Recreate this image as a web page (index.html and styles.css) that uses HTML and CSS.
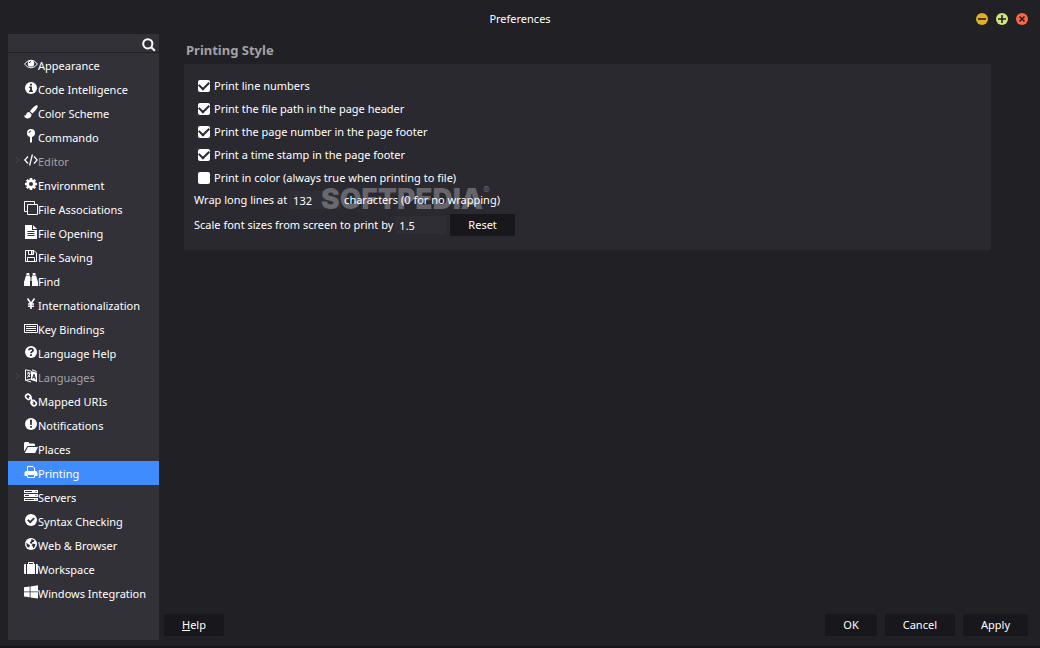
FILE: index.html
```html
<!DOCTYPE html>
<html lang="en">
  <head>
    <meta charset="UTF-8" />
    <meta name="viewport" content="width=device-width, initial-scale=1.0" />
    <title>Preferences</title>
    <link rel="stylesheet" href="styles.css">
  </head>
  <body>
    <header class="titlebar">
      <h1>Preferences</h1>
      <div class="window-buttons">
        <button type="button" class="minimize" aria-label="Minimize">
          <svg viewBox="0 0 12 12"><path d="M2 6h8" /></svg>
        </button>
        <button type="button" class="maximize" aria-label="Maximize">
          <svg viewBox="0 0 12 12"><path d="M2 6h8M6 2v8" /></svg>
        </button>
        <button type="button" class="close" aria-label="Close">
          <svg viewBox="0 0 12 12"><path d="M3.500 3.500l5 5M8.500 3.500l-5 5" /></svg>
        </button>
      </div>
    </header>

    <div class="content">
      <aside class="sidebar">
        <div class="search">
          <input type="search" aria-label="Filter preferences" />
          <svg viewBox="0 0 14 14"><circle cx="5.800" cy="5.800" r="4.600" /><path d="M9.200 9.200l3.600 3.600" /></svg>
        </div>
        <nav>
          <a href="#appearance">
            <svg viewBox="0 0 14 14"><path class="line" d="M.6 7Q3 3.200 7 3.200T13.400 7Q11 10.800 7 10.800T.6 7z" /><circle cx="7" cy="6.400" r="3.200" /><path class="cut-line" d="M5.300 6.200a1.700 1.700 0 0 1 1.700-1.700" /></svg>
            Appearance
          </a>
          <a href="#code-intelligence">
            <svg viewBox="0 0 14 14"><circle cx="7" cy="7" r="6" /><path class="cut" d="M6 2.800h2v1.700H6zM5.200 5.600H8v4h.9v1.300H5.100V9.600H6V6.900h-.8z" /></svg>
            Code Intelligence
          </a>
          <a href="#color-scheme">
            <svg viewBox="0 0 14 14"><path d="M12.300.3c.9-.3 1.700.5 1.400 1.400-.8 2.300-3 4.900-5.400 6.700L6 6.300C7.600 3.900 10 1.200 12.300.3zM5.200 7l2.300 2.200c.1 2.300-1.300 4.200-3.700 4.200-2.100 0-3.300-1.100-3.800-3.200.8.500 1.500.6 2-.2C2.400 8.200 3.500 6.900 5.200 7z" /></svg>
            Color Scheme
          </a>
          <a href="#commando">
            <svg viewBox="0 0 14 14"><circle cx="7" cy="4" r="4" /><path d="M6 7h2v6.500H6z" /><path class="cut-line" d="M5 4a2 2 0 0 1 2-2" /></svg>
            Commando
          </a>
          <a href="#editor" class="group">
            <svg class="chevron" viewBox="0 0 6 8"><path d="M1 1l3 3-3 3" /></svg>
            <svg viewBox="0 0 14 14"><path class="code" d="M4 3.500L.8 7 4 10.500M10 3.500L13.200 7 10 10.500M8.400 1.500l-2.800 11" /></svg>
            Editor
          </a>
          <a href="#environment">
            <svg viewBox="0 0 14 14"><path class="teeth" d="M7 1v12M1 7h12M2.800 2.800l8.400 8.400M11.200 2.800l-8.400 8.400" /><circle cx="7" cy="7" r="4.600" /><circle class="cut" cx="7" cy="7" r="2" /></svg>
            Environment
          </a>
          <a href="#file-associations">
            <svg viewBox="0 0 14 14"><path class="line" d="M3.500 3.500h10v10h-10zM3 10.500H.5V.5h10V3" /></svg>
            File Associations
          </a>
          <a href="#file-opening">
            <svg viewBox="0 0 14 14"><path d="M1 0h7v5h5v9H1zM9 0l4 4H9z" /><path class="cut-line" d="M3.500 6.500h7M3.500 8.500h7M3.500 10.500h7" /></svg>
            File Opening
          </a>
          <a href="#file-saving">
            <svg viewBox="0 0 14 14"><path class="line" d="M1.500 1.500h8.500l2.500 2.500v8.500h-11zM3.500 12.500v-4h7v4M4.500 1.500v4h5v-4" /><path d="M7 2h1.500v3H7z" /></svg>
            File Saving
          </a>
          <a href="#find">
            <svg viewBox="0 0 14 14"><path d="M2.500 0h2.800v2H2.500zM8.700 0h2.800v2H8.700zM2 2.500h4V13H0V9zM8 2.500h4L14 9v4H8zM6.500 4h1v4h-1z" /></svg>
            Find
          </a>
          <a href="#internationalization">
            <svg viewBox="0 0 14 14"><path class="thick" d="M3.500 1.500L7 6.500l3.500-5M7 6.500V12M4 7h6M4 9.200h6" /></svg>
            Internationalization
          </a>
          <a href="#key-bindings">
            <svg viewBox="0 0 14 14"><path class="line" d="M0 3.500h13.500v8H.5v-8M2 5.500h10M2 7.500h10M2 9.500h10" /></svg>
            Key Bindings
          </a>
          <a href="#language-help">
            <svg viewBox="0 0 14 14"><circle cx="7" cy="7" r="6" /><path class="cut-thick" d="M5 5.300Q5 3.700 7 3.700T9 5.300Q9 6.200 8 6.700T7 8.200" /><path class="cut" d="M6.100 9.200h1.800v1.700H6.100z" /></svg>
            Language Help
          </a>
          <a href="#languages" class="group">
            <svg class="chevron" viewBox="0 0 6 8"><path d="M1 1l3 3-3 3" /></svg>
            <svg viewBox="0 0 14 14"><path class="line" d="M7 2L1.500.8v10.500L7 10M1.500 11.300L7 13M3 4h3.500M4.500 3v1.500M3 8.500Q5.500 7.500 6 4M3.500 5.500L6 8M8 .8l4.500 1.700" /><path d="M7 2l6 1.800V13l-6-2z" /><path class="cut-line" d="M8.500 9.500L10 5.200l1.500 5.300M9 8.200l2 .6" /></svg>
            Languages
          </a>
          <a href="#mapped-uris">
            <svg viewBox="0 0 14 14"><rect class="thick" x="1.500" y="1.500" width="5.500" height="4.500" rx="2.200" transform="rotate(45 4.200 3.800)" /><rect class="thick" x="7" y="8" width="5.500" height="4.500" rx="2.200" transform="rotate(45 9.800 10.200)" /><path class="thick" d="M5 4.500Q8 5 7.500 7.500T9.500 10" /></svg>
            Mapped URIs
          </a>
          <a href="#notifications">
            <svg viewBox="0 0 14 14"><circle cx="7" cy="7" r="6" /><path class="cut" d="M6 2.800h2L7.800 8H6.200zM6.100 9h1.800v1.800H6.100z" /></svg>
            Notifications
          </a>
          <a href="#places">
            <svg viewBox="0 0 14 14"><path d="M0 10.500V2l1-1h3.500l1 1.500H10l1 1V5H3.500zM4 6h10l-2.800 6H.8z" /></svg>
            Places
          </a>
          <a href="#printing" class="selected" aria-current="page">
            <svg viewBox="0 0 14 14"><path class="line" d="M3.500 7V1.500h5.500l1.500 1.500V7M3.500 9.500h7v3h-7z" /><path d="M2.500 6h9Q13.500 6 13.500 8v3H11V9H3v2H.5V8Q.5 6 2.500 6z" /></svg>
            Printing
          </a>
          <a href="#servers">
            <svg viewBox="0 0 14 14"><path d="M0 1h14v3H0zM0 5h14v3H0zM0 9h14v3H0z" /><path class="cut-line" d="M1 2.500h7M1 6.500h4M1 10.500h9M11.500 2.500h1M11.500 6.500h1M11.500 10.500h1" /></svg>
            Servers
          </a>
          <a href="#syntax-checking">
            <svg viewBox="0 0 14 14"><circle cx="7" cy="7" r="6" /><path class="cut-thick" d="M3.800 6.800l2.400 2.400 4-4.200" /></svg>
            Syntax Checking
          </a>
          <a href="#web">
            <svg viewBox="0 0 14 14"><circle cx="7" cy="7" r="6" /><path class="cut" d="M7.500 1.900l3.200 1.600-1 1.500-1.700.3.500 1.300-2 .2-.6-1.600 1.200-1.200zM9 6.800l2.500.3-.7 2.600-1.600 1.500-.7-2.200-1-1zM2.200 5.500l2 1.700 1.800.8-.7 2.200-1.300.4Q2.200 9 2.200 5.500z" /></svg>
            Web &amp; Browser
          </a>
          <a href="#workspace">
            <svg viewBox="0 0 14 14"><path d="M3 3h8v10H3zM2 3v10H1q-1 0-1-1V4q0-1 1-1zM12 3h1q1 0 1 1v8q0 1-1 1h-1z" /><path class="line" d="M4.500 3V1.500h5V3" /></svg>
            Workspace
          </a>
          <a href="#windows-integration">
            <svg viewBox="0 0 14 14"><path d="M0 2.300L5.700 1.500v5H0zM6.500 1.400L14 .3v6.200H6.500zM0 7.300h5.700v5L0 11.500zM6.500 7.300H14v6.200l-7.500-1.100z" /></svg>
            Windows Integration
          </a>
        </nav>
      </aside>

      <main>
        <form class="page">
          <h2>Printing Style</h2>
          <div class="panel">
            <label class="check"><input type="checkbox" checked /> Print line numbers</label>
            <label class="check"><input type="checkbox" checked /> Print the file path in the page header</label>
            <label class="check"><input type="checkbox" checked /> Print the page number in the page footer</label>
            <label class="check"><input type="checkbox" checked /> Print a time stamp in the page footer</label>
            <label class="check"><input type="checkbox" /> Print in color (always true when printing to file)</label>
            <div class="field">
              <label for="wrap">Wrap long lines at</label>
              <input id="wrap" type="text" value="132" />
              <span class="after">characters (0 for no wrapping)</span>
              <div class="watermark">SOFTPEDIA<sup>®</sup></div>
            </div>
            <div class="field">
              <label for="scale">Scale font sizes from screen to print by</label>
              <input id="scale" type="text" value="1.5" />
              <button type="button" class="reset">Reset</button>
            </div>
          </div>
        </form>

        <footer class="actions">
          <button type="button" class="help"><u>H</u>elp</button>
          <button type="button">OK</button>
          <button type="button">Cancel</button>
          <button type="button">Apply</button>
        </footer>
      </main>
    </div>
  </body>
</html>
```

FILE: styles.css
```css
* {
  box-sizing: border-box;
}

body {
  display: flex;
  flex-direction: column;
  min-height: 100vh;
  margin: 0;
  border-bottom: 2px solid #17151a;
  background: #212025;
  color: #fff;
  font: 11px/16px "Noto Sans", sans-serif;
}

button,
input {
  border: 0;
  color: inherit;
  font: inherit;
}

svg {
  display: block;
}

.titlebar {
  display: grid;
  grid-template-columns: 1fr auto 1fr;
  align-items: center;
  height: 34px;
  padding: 4px 12px 0;
}

.titlebar h1 {
  grid-column: 2;
  margin: 0;
  font-size: 11px;
  font-weight: normal;
}

.window-buttons {
  display: flex;
  justify-content: flex-end;
  gap: 8px;
}

.window-buttons button {
  width: 12px;
  height: 12px;
  padding: 0;
  border-radius: 50%;
}

.window-buttons path {
  fill: none;
  stroke: #212025;
  stroke-width: 1.6;
}

.minimize {
  background: #dfae2c;
}

.maximize {
  background: #d3e378;
}

.close {
  background: #ff6545;
}

.content {
  display: flex;
  flex: 1;
  padding: 0 12px 6px 8px;
}

.sidebar {
  width: 151px;
  background: #323137;
}

.search {
  display: flex;
  align-items: center;
  height: 19px;
  padding-right: 3px;
  border-bottom: 1px solid #212025;
}

.search input {
  flex: 1;
  min-width: 0;
  height: 18px;
  background: none;
}

.search svg {
  width: 14px;
  height: 14px;
  margin-top: 3px;
  fill: none;
  stroke: #fff;
  stroke-width: 2;
}

nav a {
  display: flex;
  align-items: center;
  height: 24px;
  padding: 2px 0 0 16px;
  color: #fff;
  text-decoration: none;
  white-space: nowrap;
}

nav svg {
  width: 14px;
  height: 14px;
  margin-bottom: 4px;
  fill: #fff;
}

nav .group {
  padding-left: 7px;
  color: #a3a2a6;
}

nav .chevron {
  width: 6px;
  height: 8px;
  margin-right: 3px;
  fill: none;
  stroke: #4b4a50;
}

nav .selected {
  background: #3f8cff;
}

/* icon strokes */
.line,
.code,
.thick,
.teeth {
  fill: none;
  stroke: #fff;
}

.code {
  stroke-width: 1.3;
}

.thick {
  stroke-width: 1.6;
}

.teeth {
  stroke-width: 2.6;
}

.cut {
  fill: #323137;
}

.cut-line,
.cut-thick {
  fill: none;
  stroke: #323137;
}

.cut-thick {
  stroke-width: 1.8;
}

main {
  display: flex;
  flex: 1;
  flex-direction: column;
  padding: 0 0 4px 5px;
}

.page {
  flex: 1;
  padding: 0 37px 0 20px;
}

.page h2 {
  margin: 0;
  padding: 6px 0 4px 2px;
  color: #a3a2a6;
  font-size: 13px;
  line-height: 20px;
}

.panel {
  padding: 10px 10px 14px;
  background: #2a2930;
}

.check {
  display: flex;
  align-items: center;
  gap: 4px;
  height: 23px;
  padding-left: 4px;
}

.check input {
  display: grid;
  width: 12px;
  height: 12px;
  margin: 0;
  padding-bottom: 2px;
  border-radius: 2px;
  background: #fff;
  appearance: none;
  place-items: center;
}

.check input:checked::before {
  width: 8px;
  height: 5px;
  border: solid #2a2930;
  border-width: 0 0 2px 2px;
  content: "";
  transform: rotate(-45deg);
}

.field {
  display: flex;
  position: relative;
  align-items: center;
  height: 22px;
}

.field + .field {
  margin-top: 3px;
}

.field input {
  width: 51px;
  height: 18px;
  margin: 0 4px 0 2px;
  padding: 0 4px;
  background: #2f2e34;
}

.after {
  z-index: 1;
}

.watermark {
  position: absolute;
  top: -4px;
  left: 127px;
  color: rgba(255, 255, 255, 0.28);
  font: 900 28px/28px Inter, sans-serif;
  pointer-events: none;
}

.watermark sup {
  font-size: 10px;
  font-weight: 400;
  line-height: 10px;
  vertical-align: 15px;
}

.actions {
  display: flex;
  gap: 8px;
}

.actions button,
.reset {
  height: 22px;
  padding: 0 18px;
  border-radius: 1px;
  background: #18171b;
}

.actions .help {
  margin-right: auto;
}
```
